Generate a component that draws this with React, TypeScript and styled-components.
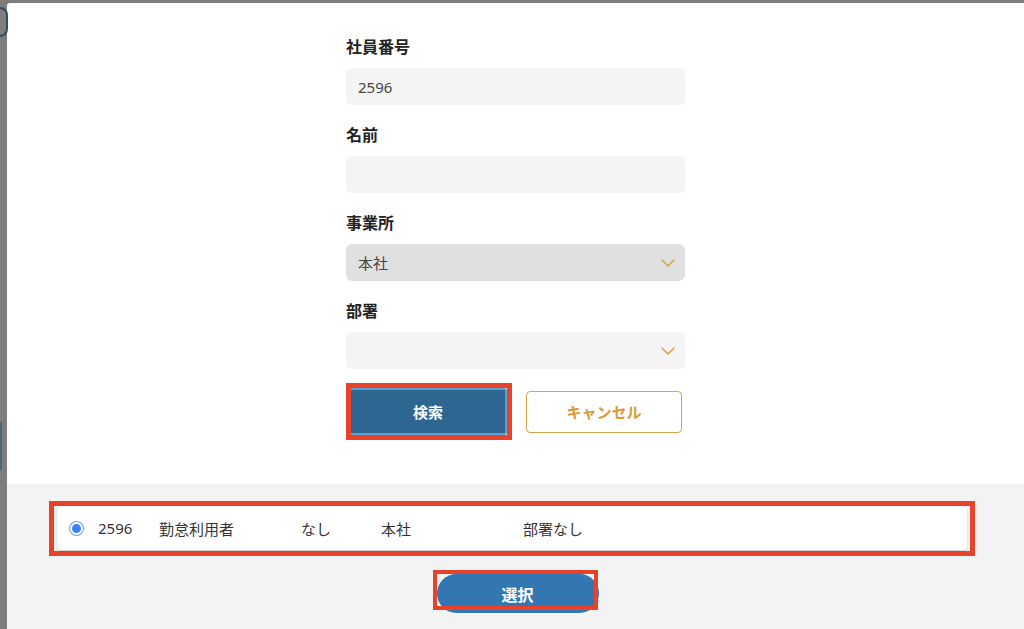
import styled, { createGlobalStyle } from "styled-components";

const GlobalStyle = createGlobalStyle`
  html, body {
    margin: 0;
    padding: 0;
    height: 100%;
    overflow: hidden;
  }
  body {
    font-family: "Noto Sans", "Noto Sans CJK JP", sans-serif;
    background: #7d7d7d;
  }
`;

const results = [
  { id: "2596", name: "勤怠利用者", role: "なし", office: "本社", dept: "部署なし" },
];

const fields = [
  { label: "社員番号", value: "2596", kind: "input" },
  { label: "名前", value: "", kind: "input" },
  { label: "事業所", value: "本社", kind: "disabled" },
  { label: "部署", value: "", kind: "select" },
];

const Chevron = () => (
  <svg width="14" height="8" viewBox="0 0 14 8">
    <polyline
      points="1,1 7,7 13,1"
      fill="none"
      stroke="#d9a24a"
      strokeWidth="1.6"
      strokeLinecap="round"
      strokeLinejoin="round"
    />
  </svg>
);

export default function App() {
  return (
    <>
      <GlobalStyle />
      <Backdrop>
        <SideStrip>
          <LogoMark />
          <DimBox />
        </SideStrip>
        <Modal>
          <Top>
            <Form>
              {fields.map((f) => (
                <Field key={f.label}>
                  <Label>{f.label}</Label>
                  <Box $kind={f.kind}>
                    <span>{f.value}</span>
                    {f.kind !== "input" && <Chevron />}
                  </Box>
                </Field>
              ))}
              <BtnRow>
                <Marked>
                  <SearchBtn>検索</SearchBtn>
                </Marked>
                <CancelBtn>キャンセル</CancelBtn>
              </BtnRow>
            </Form>
          </Top>
          <Footer>
            <ResultMark>
              {results.map((r) => (
                <ResultRow key={r.id}>
                  <Radio />
                  <Cell $w={61}>{r.id}</Cell>
                  <Cell $w={142}>{r.name}</Cell>
                  <Cell $w={80}>{r.role}</Cell>
                  <Cell $w={142}>{r.office}</Cell>
                  <Cell>{r.dept}</Cell>
                </ResultRow>
              ))}
            </ResultMark>
            <SelectWrap>
              <SelectBtn>選択</SelectBtn>
              <SelectMark />
            </SelectWrap>
          </Footer>
        </Modal>
      </Backdrop>
    </>
  );
}

const Backdrop = styled.div`
  display: flex;
  height: 100vh;
  padding-top: 3px;
  box-sizing: border-box;
  background: #7d7d7d;
`;

const SideStrip = styled.div`
  width: 7px;
  position: relative;
  flex-shrink: 0;
`;

const LogoMark = styled.div`
  position: absolute;
  left: -8px;
  top: 4px;
  width: 12px;
  height: 26px;
  border: 2px solid #2e4d6b;
  border-left-color: transparent;
  border-radius: 8px;
`;

const DimBox = styled.div`
  position: absolute;
  left: -4px;
  top: 418px;
  width: 6px;
  height: 50px;
  background: #4f6578;
  border-radius: 3px;
`;

const Modal = styled.div`
  flex: 1;
  display: flex;
  flex-direction: column;
  background: #fff;
  border-top-left-radius: 3px;
  overflow: hidden;
`;

const Top = styled.div`
  height: 481px;
  display: flex;
  justify-content: center;
  padding-top: 33px;
  box-sizing: border-box;
`;

const Form = styled.div`
  width: 339px;
  display: flex;
  flex-direction: column;
  gap: 19px;
`;

const Field = styled.div`
  display: flex;
  flex-direction: column;
`;

const Label = styled.div`
  font-size: 16px;
  font-weight: 700;
  color: #222;
  line-height: 22px;
  margin-bottom: 10px;
`;

const Box = styled.div<{ $kind: string }>`
  height: 37px;
  border-radius: 6px;
  background: ${(p) => (p.$kind === "disabled" ? "#e0e0e0" : "#f4f4f4")};
  display: flex;
  align-items: center;
  justify-content: space-between;
  padding: 0 10px 0 12px;
  box-sizing: border-box;
  font-size: 15px;
  color: #444;
`;

const BtnRow = styled.div`
  display: flex;
  align-items: center;
  gap: 14px;
  margin-top: -5px;
`;

const Marked = styled.div`
  border: 5px solid #e8432a;
  display: flex;
  overflow: hidden;
`;

const SearchBtn = styled.button`
  width: 156px;
  height: 47px;
  background: #2d6690;
  border: none;
  border-top: 2px solid #5b9fd0;
  border-bottom: 2px solid #5b9fd0;
  border-right: 2px solid #5b9fd0;
  border-radius: 0 3px 3px 0;
  color: #fff;
  font-family: inherit;
  font-size: 15px;
  font-weight: 700;
`;

const CancelBtn = styled.button`
  width: 156px;
  height: 42px;
  background: #fff;
  border: 1px solid #d9a44a;
  border-radius: 4px;
  color: #d99a36;
  font-family: inherit;
  font-size: 15px;
  font-weight: 700;
`;

const Footer = styled.div`
  flex: 1;
  background: #f3f3f3;
  display: flex;
  flex-direction: column;
  align-items: center;
  padding-top: 17px;
  gap: 14px;
`;

const ResultMark = styled.div`
  align-self: flex-start;
  margin-left: 42px;
  width: 926px;
  box-sizing: border-box;
  border: 5px solid #e8432a;
  padding: 0 3px 1px 3px;
`;

const ResultRow = styled.div`
  height: 44px;
  background: #fff;
  border-radius: 4px;
  box-shadow: 0 1px 2px rgba(0, 0, 0, 0.18);
  display: flex;
  align-items: center;
  padding-left: 13px;
  font-size: 15px;
  color: #333;
`;

const Radio = styled.span`
  width: 9px;
  height: 9px;
  border-radius: 50%;
  background: #3b82f6;
  border: 2px solid #fff;
  box-shadow: 0 0 0 1px #6aa0f0;
  margin-right: 15px;
  flex-shrink: 0;
`;

const Cell = styled.span<{ $w?: number }>`
  width: ${(p) => (p.$w ? `${p.$w}px` : "auto")};
  flex-shrink: 0;
`;

const SelectWrap = styled.div`
  position: relative;
  width: 166px;
`;

const SelectBtn = styled.button`
  width: 162px;
  height: 39px;
  margin: 4px 0 0 4px;
  background: #3277b1;
  border: none;
  border-radius: 20px;
  color: #fff;
  font-family: inherit;
  font-size: 16px;
  font-weight: 700;
  display: block;
`;

const SelectMark = styled.div`
  position: absolute;
  left: 0;
  top: 0;
  width: 165px;
  height: 40px;
  box-sizing: border-box;
  border: 4px solid #e8432a;
  pointer-events: none;
`;
